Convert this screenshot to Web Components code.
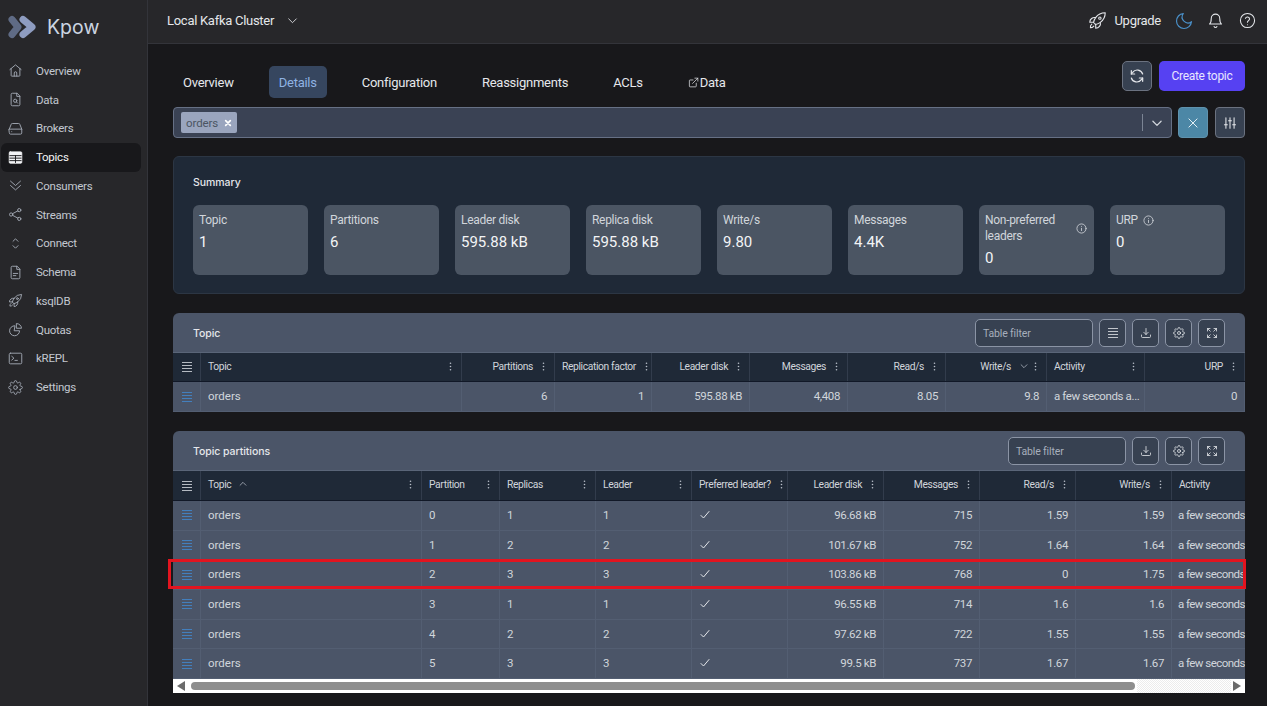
<!DOCTYPE html>
<html lang="en">
<head>
<meta charset="utf-8">
<title>Kpow</title>
<style>
  html, body { margin: 0; height: 100%; background: #18181b; overflow: hidden; }
  body { font-family: Roboto, "Liberation Sans", sans-serif; color: #e5e7eb; }
</style>
</head>
<body>
<kpow-app>
  <kpow-sidebar slot="sidebar">
    <kpow-nav-item icon="home">Overview</kpow-nav-item>
    <kpow-nav-item icon="file-search">Data</kpow-nav-item>
    <kpow-nav-item icon="drive">Brokers</kpow-nav-item>
    <kpow-nav-item icon="table" active>Topics</kpow-nav-item>
    <kpow-nav-item icon="chevrons">Consumers</kpow-nav-item>
    <kpow-nav-item icon="share">Streams</kpow-nav-item>
    <kpow-nav-item icon="selector">Connect</kpow-nav-item>
    <kpow-nav-item icon="file-text">Schema</kpow-nav-item>
    <kpow-nav-item icon="rocket">ksqlDB</kpow-nav-item>
    <kpow-nav-item icon="pie">Quotas</kpow-nav-item>
    <kpow-nav-item icon="terminal">kREPL</kpow-nav-item>
    <kpow-nav-item icon="gear">Settings</kpow-nav-item>
  </kpow-sidebar>
  <kpow-topbar slot="topbar" cluster="Local Kafka Cluster"></kpow-topbar>

  <kpow-tabs></kpow-tabs>
  <kpow-filter tag="orders"></kpow-filter>

  <kpow-summary>
    <kpow-stat label="Topic" value="1"></kpow-stat>
    <kpow-stat label="Partitions" value="6"></kpow-stat>
    <kpow-stat label="Leader disk" value="595.88 kB"></kpow-stat>
    <kpow-stat label="Replica disk" value="595.88 kB"></kpow-stat>
    <kpow-stat label="Write/s" value="9.80"></kpow-stat>
    <kpow-stat label="Messages" value="4.4K"></kpow-stat>
    <kpow-stat label="Non-preferred leaders" value="0" info="side"></kpow-stat>
    <kpow-stat label="URP" value="0" info="inline"></kpow-stat>
  </kpow-summary>

  <kpow-panel title="Topic" tools="bars,download,gear,expand">
    <kpow-table
      cols="261 93 97 98 98 98 101 98 100"
      align="l r r r r r r l r"
      head="Topic|Partitions|Replication factor|Leader disk|Messages|Read/s|Write/s:down|Activity|URP"
      rows="orders|6|1|595.88 kB|4,408|8.05|9.8|a few seconds a...|0"></kpow-table>
  </kpow-panel>

  <kpow-panel title="Topic partitions" tools="download,gear,expand" highlight="2">
    <kpow-table
      cols="221 78 96 96 96 96 96 96 96 110"
      align="l l l l l r r r r l"
      head="Topic:up|Partition|Replicas|Leader|Preferred leader?|Leader disk|Messages|Read/s|Write/s|Activity"
      rows="orders|0|1|1|check|96.68 kB|715|1.59|1.59|a few seconds;orders|1|2|2|check|101.67 kB|752|1.64|1.64|a few seconds;orders|2|3|3|check|103.86 kB|768|0|1.75|a few seconds;orders|3|1|1|check|96.55 kB|714|1.6|1.6|a few seconds;orders|4|2|2|check|97.62 kB|722|1.55|1.55|a few seconds;orders|5|3|3|check|99.5 kB|737|1.67|1.67|a few seconds"
      scrollbar></kpow-table>
  </kpow-panel>
</kpow-app>

<script>
const ICONS = {
  home: '<path d="M3 10.5 12 3l9 7.5"/><path d="M5 9v11a1 1 0 0 0 1 1h12a1 1 0 0 0 1-1V9"/><path d="M10 21v-5a2 2 0 0 1 4 0v5"/>',
  'file-search': '<path d="M14 2H7a2 2 0 0 0-2 2v16a2 2 0 0 0 2 2h10a2 2 0 0 0 2-2V7z"/><path d="M14 2v5h5"/><circle cx="11.5" cy="14" r="2.6"/><path d="m13.5 16 1.8 1.8"/>',
  drive: '<path d="M2 13h20v6a2 2 0 0 1-2 2H4a2 2 0 0 1-2-2z"/><path d="M2 13 5 5.5A2 2 0 0 1 7 4h10a2 2 0 0 1 2 1.5l3 7.5"/><path d="M6 17h.01"/>',
  table: '<rect x="2" y="3" width="20" height="18" rx="1.5" fill="currentColor"/><g stroke="#18181b" stroke-width="1.5"><path d="M3 9h18M3 13h18M3 17h18M12 9v11"/></g>',
  chevrons: '<path d="m4 5 8 7 8-7"/><path d="m4 12 8 7 8-7"/>',
  share: '<circle cx="18" cy="5" r="2.6"/><circle cx="5" cy="12" r="2.6"/><circle cx="18" cy="19" r="2.6"/><path d="m7.3 10.7 8.4-4.5M7.3 13.3l8.4 4.5"/>',
  selector: '<path d="m8 8.5 4-4 4 4"/><path d="m8 15.5 4 4 4-4"/>',
  'file-text': '<path d="M14 2H7a2 2 0 0 0-2 2v16a2 2 0 0 0 2 2h10a2 2 0 0 0 2-2V7z"/><path d="M14 2v5h5"/><path d="M8.500 13.500h7M8.500 17h4"/>',
  rocket: '<path d="M15.59 14.37a6 6 0 0 1-5.84 7.38v-4.8m5.84-2.58a14.98 14.98 0 0 0 6.16-12.12A14.98 14.98 0 0 0 9.631 8.41m5.96 5.96a14.926 14.926 0 0 1-5.841 2.58m-.119-8.54a6 6 0 0 0-7.381 5.84h4.8m2.581-5.84a14.927 14.927 0 0 0-2.58 5.84m2.699 2.7c-.103.021-.207.041-.311.06a15.09 15.09 0 0 1-2.448-2.448 14.9 14.9 0 0 1 .06-.312m-2.24 2.39a4.493 4.493 0 0 0-1.757 4.306 4.493 4.493 0 0 0 4.306-1.758M16.5 9a1.5 1.5 0 1 1-3 0 1.5 1.500 0 0 1 3 0z"/>',
  pie: '<path d="M10.500 6a8 8 0 1 0 8 8h-8z"/><path d="M14 2.500a7.500 7.500 0 0 1 7.500 7.500H14z"/>',
  terminal: '<rect x="2" y="3.500" width="20" height="17" rx="2"/><path d="m6 8.500 3.500 3L6 14.500M11 15h4"/>',
  gear: '<circle cx="12" cy="12" r="3"/><path d="M19.4 15a1.65 1.65 0 0 0 .33 1.82l.06.06a2 2 0 0 1 0 2.83 2 2 0 0 1-2.83 0l-.06-.06a1.65 1.65 0 0 0-1.82-.33 1.65 1.65 0 0 0-1 1.51V21a2 2 0 0 1-2 2 2 2 0 0 1-2-2v-.09A1.65 1.65 0 0 0 9 19.4a1.65 1.65 0 0 0-1.82.33l-.06.06a2 2 0 0 1-2.83 0 2 2 0 0 1 0-2.83l.06-.06a1.65 1.65 0 0 0 .33-1.82 1.65 1.65 0 0 0-1.51-1H3a2 2 0 0 1-2-2 2 2 0 0 1 2-2h.09A1.65 1.65 0 0 0 4.6 9a1.65 1.65 0 0 0-.33-1.82l-.06-.06a2 2 0 0 1 0-2.83 2 2 0 0 1 2.83 0l.06.06a1.65 1.65 0 0 0 1.82.33H9a1.65 1.65 0 0 0 1-1.51V3a2 2 0 0 1 2-2 2 2 0 0 1 2 2v.09a1.65 1.65 0 0 0 1 1.51 1.65 1.65 0 0 0 1.82-.33l.06-.06a2 2 0 0 1 2.83 0 2 2 0 0 1 0 2.83l-.06.06a1.65 1.65 0 0 0-.33 1.82V9a1.65 1.65 0 0 0 1.51 1H21a2 2 0 0 1 2 2 2 2 0 0 1-2 2h-.09a1.65 1.65 0 0 0-1.51 1z"/>',
  moon: '<path d="M21 12.790A9 9 0 1 1 11.210 3 7 7 0 0 0 21 12.790z"/>',
  bell: '<path d="M18 9a6 6 0 0 0-12 0c0 6-2.500 8-2.500 8h17S18 15 18 9z"/><path d="M10 20.500a2.200 2.200 0 0 0 4 0"/>',
  help: '<circle cx="12" cy="12" r="10"/><path d="M9.100 9a3 3 0 0 1 5.800 1c0 2-3 2.500-3 4.500"/><path d="M12 18h.01"/>',
  chevron: '<path d="m5 9 7 7 7-7"/>',
  down: '<path d="m5 9 7 7 7-7"/>',
  up: '<path d="m5 15 7-7 7 7"/>',
  refresh: '<path d="M20.500 9A8.500 8.500 0 0 0 5.500 6.500L3.500 9"/><path d="M3.500 4v5h5"/><path d="M3.500 15a8.500 8.500 0 0 0 15 2.500l2-2.500"/><path d="M20.500 20v-5h-5"/>',
  close: '<path d="M5 5l14 14M19 5 5 19"/>',
  sliders: '<path d="M5 3v18M12 3v18M19 3v18"/><path d="M2.500 15h5M9.500 8h5M16.500 15h5"/>',
  bars: '<path stroke-linecap="butt" d="M2 3h20M2 9h20M2 15h20M2 21h20"/>',
  download: '<path d="M12 3v12M7.500 10.500 12 15l4.500-4.500"/><path d="M3 16v3a2 2 0 0 0 2 2h14a2 2 0 0 0 2-2v-3"/>',
  expand: '<path d="M3 8V3h5M3 3l5.500 5.500M21 8V3h-5M21 3l-5.500 5.500M3 16v5h5M3 21l5.500-5.500M21 16v5h-5M21 21l-5.500-5.500"/>',
  info: '<circle cx="12" cy="12" r="10"/><path d="M12 11.500v5M12 7.500h.01"/>',
  check: '<path d="m4 13 5 5L20 5"/>',
  link: '<path d="M18 13.500V20a1.500 1.500 0 0 1-1.500 1.500h-12A1.500 1.500 0 0 1 3 20V8a1.500 1.500 0 0 1 1.500-1.500H11"/><path d="M15 2.500h6.500V9M21.500 2.500 10 14"/>'
};

class KpowIcon extends HTMLElement {
  connectedCallback() {
    const size = this.getAttribute('size') || 16;
    const stroke = this.getAttribute('stroke') || 1.6;
    this.attachShadow({ mode: 'open' });
    this.shadowRoot.innerHTML = `
      <style>
        :host { display: inline-flex; flex: none; width: ${size}px; height: ${size}px; }
        svg { width: 100%; height: 100%; display: block; }
      </style>
      <svg viewBox="0 0 24 24" fill="none" stroke="currentColor" stroke-width="${stroke}"
           stroke-linecap="round" stroke-linejoin="round">${ICONS[this.getAttribute('name')] || ''}</svg>`;
  }
}

class KpowApp extends HTMLElement {
  connectedCallback() {
    this.attachShadow({ mode: 'open' });
    this.shadowRoot.innerHTML = `
      <style>
        :host {
          display: grid;
          grid-template-columns: 148px 1fr;
          grid-template-rows: 44px 1fr;
          height: 706px;
          overflow: hidden;
        }
        ::slotted([slot="sidebar"]) { grid-row: 1 / 3; }
        main {
          display: flex;
          flex-direction: column;
          padding: 17px 22px 0 25px;
          min-width: 0;
        }
      </style>
      <slot name="sidebar"></slot>
      <slot name="topbar"></slot>
      <main><slot></slot></main>`;
  }
}

class KpowSidebar extends HTMLElement {
  connectedCallback() {
    this.attachShadow({ mode: 'open' });
    this.shadowRoot.innerHTML = `
      <style>
        :host {
          display: block;
          background: #27272a;
          border-right: 1px solid #33343a;
          box-sizing: border-box;
        }
        .logo {
          display: flex;
          align-items: center;
          gap: 10px;
          height: 56.6px;
          padding-left: 8px;
          box-sizing: border-box;
          font-family: Inter, sans-serif;
          font-size: 19.5px;
          color: #cbd5e1;
          padding-bottom: 2px;
        }
        svg { width: 29px; height: 24px; }
        nav { display: flex; flex-direction: column; padding: 0 6px 0 1px; }
      </style>
      <div class="logo">
        <svg viewBox="0 0 29 24" fill="none" stroke-width="7" stroke-linecap="round" stroke-linejoin="round">
          <path d="M4 4.500l6 7.500-6 7.500" stroke="#5f6b85"/>
          <path d="M15 4.500l9 7.500-9 7.500" stroke="#8e9cc0"/>
        </svg>
        <span>Kpow</span>
      </div>
      <nav><slot></slot></nav>`;
  }
}

class KpowNavItem extends HTMLElement {
  connectedCallback() {
    this.attachShadow({ mode: 'open' });
    this.shadowRoot.innerHTML = `
      <style>
        :host {
          display: flex;
          align-items: center;
          gap: 13px;
          height: 28.75px;
          padding-left: 7px;
          border-radius: 6px;
          font-size: 11.5px;
          letter-spacing: -.25px;
          color: #c3c8d0;
        }
        :host([active]) { background: #18181b; color: #f3f4f6; }
        kpow-icon { color: #a1a7b2; }
        :host([active]) kpow-icon { color: #f3f4f6; }
      </style>
      <kpow-icon name="${this.getAttribute('icon')}" size="15" stroke="1.5"></kpow-icon>
      <span><slot></slot></span>`;
  }
}

class KpowTopbar extends HTMLElement {
  connectedCallback() {
    this.attachShadow({ mode: 'open' });
    this.shadowRoot.innerHTML = `
      <style>
        :host {
          display: flex;
          align-items: center;
          background: #27272a;
          border-bottom: 1px solid #33343a;
          box-sizing: border-box;
          padding: 0 11px 2px 19px;
          font-size: 13px;
          letter-spacing: -.28px;
          color: #e5e7eb;
        }
        .cluster { margin-right: 12px; }
        .end { margin-left: auto; display: flex; align-items: center; }
        .upgrade { margin: 0 13px 0 7px; }
        .moon { color: #4a90c9; margin-right: 13px; }
        .bell { margin-right: 15px; }
      </style>
      <span class="cluster">${this.getAttribute('cluster')}</span>
      <kpow-icon name="chevron" size="13"></kpow-icon>
      <div class="end">
        <kpow-icon name="rocket" size="19" stroke="1.4"></kpow-icon>
        <span class="upgrade">Upgrade</span>
        <kpow-icon class="moon" name="moon" size="20" stroke="1.4"></kpow-icon>
        <kpow-icon class="bell" name="bell" size="17" stroke="1.5"></kpow-icon>
        <kpow-icon name="help" size="17" stroke="1.5"></kpow-icon>
      </div>`;
  }
}

class KpowTabs extends HTMLElement {
  connectedCallback() {
    this.attachShadow({ mode: 'open' });
    this.shadowRoot.innerHTML = `
      <style>
        :host { display: flex; align-items: flex-start; height: 37px; flex: none; }
        nav { display: flex; gap: 25px; margin-top: 5px; }
        a {
          display: flex;
          align-items: center;
          height: 32px;
          padding: 0 10px;
          border-radius: 5px;
          font-size: 13px;
          letter-spacing: -.25px;
          color: #e5e7eb;
        }
        a.active { background: #36465f; color: #8fb3e3; }
        a kpow-icon { margin-right: 1px; }
        .actions { margin-left: auto; display: flex; gap: 7px; }
        .square {
          width: 30px;
          height: 30px;
          box-sizing: border-box;
          display: flex;
          align-items: center;
          justify-content: center;
          background: #374151;
          border: 1px solid #6b7280;
          border-radius: 5px;
          color: #e5e7eb;
        }
        .create {
          width: 86px;
          height: 30px;
          display: flex;
          align-items: center;
          justify-content: center;
          background: #5641f2;
          border-radius: 5px;
          font-size: 12px;
          letter-spacing: -.3px;
          color: #e8e6ff;
        }
      </style>
      <nav>
        <a>Overview</a>
        <a class="active">Details</a>
        <a>Configuration</a>
        <a>Reassignments</a>
        <a>ACLs</a>
        <a><kpow-icon name="link" size="11"></kpow-icon>Data</a>
      </nav>
      <div class="actions">
        <div class="square"><kpow-icon name="refresh" size="16" stroke="1.8"></kpow-icon></div>
        <div class="create">Create topic</div>
      </div>`;
  }
}

class KpowFilter extends HTMLElement {
  connectedCallback() {
    this.attachShadow({ mode: 'open' });
    this.shadowRoot.innerHTML = `
      <style>
        :host { display: flex; gap: 6px; margin-top: 9px; flex: none; height: 31px; }
        .box {
          flex: 1;
          display: flex;
          align-items: center;
          padding: 0 7px;
          background: #3a4254;
          border: 1px solid #667085;
          border-radius: 4px;
          box-sizing: border-box;
        }
        .tag {
          display: flex;
          align-items: center;
          justify-content: space-between;
          width: 56px;
          height: 21px;
          padding: 0 5px;
          box-sizing: border-box;
          background: #9aa5be;
          border-radius: 2px;
          font-size: 11.5px;
          letter-spacing: -.1px;
          color: #4b5563;
        }
        .tag kpow-icon { color: #fff; }
        .sep { margin-left: auto; width: 1px; height: 17px; background: #7b8494; margin-right: 7px; }
        .caret { color: #d1d5db; }
        .btn {
          width: 30px;
          box-sizing: border-box;
          display: flex;
          align-items: center;
          justify-content: center;
          border-radius: 4px;
          border: 1px solid #6b7280;
          background: #374151;
          color: #e5e7eb;
        }
        .btn.clear { background: #4c87a6; border-color: #5f92ad; color: #f0f6fa; }
        .btn + .btn { margin-left: 1px; }
      </style>
      <div class="box">
        <div class="tag">${this.getAttribute('tag')}<kpow-icon name="close" size="8" stroke="5"></kpow-icon></div>
        <div class="sep"></div>
        <kpow-icon class="caret" name="chevron" size="14" stroke="2.2"></kpow-icon>
      </div>
      <div class="btn clear"><kpow-icon name="close" size="14"></kpow-icon></div>
      <div class="btn"><kpow-icon name="sliders" size="14" stroke="1.8"></kpow-icon></div>`;
  }
}

class KpowSummary extends HTMLElement {
  connectedCallback() {
    this.attachShadow({ mode: 'open' });
    this.shadowRoot.innerHTML = `
      <style>
        :host {
          display: block;
          margin-top: 18px;
          height: 138px;
          box-sizing: border-box;
          flex: none;
          padding: 20px 19px 0;
          background: #1f2937;
          border: 1px solid #2c3644;
          border-radius: 6px;
        }
        h2 {
          margin: 0 0 16px;
          font: 500 10.5px/12px Inter, sans-serif;
          letter-spacing: -.05px;
          color: #e5e7eb;
        }
        .cards { display: grid; grid-template-columns: repeat(8, 115px); gap: 16px; }
      </style>
      <h2>Summary</h2>
      <div class="cards"><slot></slot></div>`;
  }
}

class KpowStat extends HTMLElement {
  connectedCallback() {
    const info = this.getAttribute('info');
    this.attachShadow({ mode: 'open' });
    this.shadowRoot.innerHTML = `
      <style>
        :host {
          display: block;
          height: 70px;
          box-sizing: border-box;
          padding: 7px 6px 0;
          background: #4b5563;
          border-radius: 6px;
        }
        .label {
          display: flex;
          align-items: center;
          gap: 5px;
          font-size: 12px;
          letter-spacing: -.3px;
          line-height: 16px;
          color: #d1d5db;
        }
        .label.side { justify-content: space-between; padding-right: 1px; }
        .label span { display: block; }
        .label.side span { width: 84px; }
        .value { margin-top: 4px; font-size: 15px; line-height: 20px; color: #f3f4f6; }
      </style>
      <div class="label ${info || ''}">
        <span>${this.getAttribute('label')}</span>
        ${info ? '<kpow-icon name="info" size="11" stroke="1.8"></kpow-icon>' : ''}
      </div>
      <div class="value">${this.getAttribute('value')}</div>`;
  }
}

class KpowPanel extends HTMLElement {
  connectedCallback() {
    const tools = this.getAttribute('tools').split(',');
    const mark = this.getAttribute('highlight');
    this.attachShadow({ mode: 'open' });
    this.shadowRoot.innerHTML = `
      <style>
        :host {
          display: block;
          position: relative;
          margin-top: 19px;
          flex: none;
        }
        .frame { border-radius: 6px 6px 0 0; overflow: hidden; background: #4b5568; }
        header {
          display: flex;
          align-items: center;
          height: 40px;
          box-sizing: border-box;
          padding: 0 20px 0 20px;
          gap: 6px;
          border-bottom: 1px solid #5a6578;
        }
        h2 {
          margin: 2px auto 0 0;
          font: 500 10.5px/12px Inter, sans-serif;
          letter-spacing: -.05px;
          color: #e5e7eb;
        }
        .search {
          width: 118px;
          height: 28px;
          box-sizing: border-box;
          display: flex;
          align-items: center;
          padding: 1px 0 0 7px;
          background: #374151;
          border: 1px solid #8b94a5;
          border-radius: 5px;
          font-size: 10.5px;
          letter-spacing: -.15px;
          color: #a7afbc;
        }
        .tool {
          width: 27px;
          height: 28px;
          box-sizing: border-box;
          display: flex;
          align-items: center;
          justify-content: center;
          background: #374151;
          border: 1px solid #8b94a5;
          border-radius: 5px;
          color: #e5e7eb;
        }
        .highlight {
          position: absolute;
          left: -5px;
          right: -1px;
          top: 128px;
          height: 30px;
          box-sizing: border-box;
          border: 3px solid #e2141f;
          pointer-events: none;
        }
      </style>
      <div class="frame">
        <header>
          <h2>${this.getAttribute('title')}</h2>
          <div class="search">Table filter</div>
          ${tools.map(t => `<div class="tool"><kpow-icon name="${t}" size="12"></kpow-icon></div>`).join('')}
        </header>
        <slot></slot>
      </div>
      ${mark === null ? '' : '<div class="highlight"></div>'}`;
  }
}

class KpowTable extends HTMLElement {
  connectedCallback() {
    const cols = this.getAttribute('cols').split(' ');
    const align = this.getAttribute('align').split(' ');
    const head = this.getAttribute('head').split('|');
    const rows = this.getAttribute('rows').split(';').map(r => r.split('|'));
    const template = `28px ${cols.map(c => c + 'px').join(' ')}`;

    const headCells = head.map((h, i) => {
      const [label, sort] = h.split(':');
      const right = align[i] === 'r';
      return `<div class="th ${right ? 'r' : ''}">
        <span>${label}</span>
        ${sort ? `<kpow-icon class="sort" name="${sort}" size="10" stroke="1.8"></kpow-icon>` : ''}
        <i></i>
        <svg class="kebab" viewBox="0 0 3 11" fill="currentColor"><circle cx="1.500" cy="1.500" r="1"/><circle cx="1.500" cy="5.500" r="1"/><circle cx="1.500" cy="9.500" r="1"/></svg>
      </div>`;
    }).join('');

    const bodyRows = rows.map(r => `
      <div class="row" style="grid-template-columns:${template}">
        <div class="td handle"><kpow-icon name="bars" size="12" stroke="1.7"></kpow-icon></div>
        ${r.map((v, i) => `<div class="td ${align[i] === 'r' ? 'r' : ''} ${i ? 'tight' : ''}">${v === 'check'
          ? '<kpow-icon class="check" name="check" size="12" stroke="2"></kpow-icon>' : v}</div>`).join('')}
      </div>`).join('');

    const scrollbar = this.hasAttribute('scrollbar') ? `
      <div class="scrollbar">
        <b class="left"></b>
        <div class="thumb"></div>
        <div class="rest"></div>
        <b class="right"></b>
      </div>` : '';

    const many = rows.length > 1;
    this.attachShadow({ mode: 'open' });
    this.shadowRoot.innerHTML = `
      <style>
        :host { display: block; font-size: 11px; color: #d1d5db; }
        .rows { overflow: hidden; }
        .row { display: grid; width: max-content; }
        .head {
          height: ${many ? 30 : 29}px;
          background: #1f2937;
          color: #d1d5db;
          font-size: 10.3px;
          letter-spacing: -.38px;
          border-bottom: 1px solid #111827;
          box-sizing: border-box;
        }
        .th, .td {
          display: flex;
          align-items: center;
          padding: 0 7px;
          box-sizing: border-box;
          white-space: nowrap;
          overflow: hidden;
          border-right: 1px solid #3a4558;
          min-width: 0;
        }
        .th { padding: 0 9px ${many ? 3 : 2}px 7px; border-right-color: #323c4c; }
        .th i { flex: 1; }
        .th.r i { order: -1; }
        .th .kebab { width: 3px; height: 9px; flex: none; margin-left: 9px; color: #b8bec9; }
        .th .sort { margin-left: 7px; color: #b8bec9; }
        .th.r .sort { margin-left: 8px; margin-right: -4px; }
        .body .row { height: 29.67px; border-bottom: 1px solid #535e72; box-sizing: border-box; }
        .single .row { height: 30px; }
        .single .td { padding-bottom: 1px; }
        .td { border-right-color: #535e72; font-size: 11.5px; padding-bottom: .6px; }
        .td.tight { letter-spacing: -.37px; }
        .body:not(.single) .td:last-child { letter-spacing: -.55px; padding-left: 6px; }
        .td.r { justify-content: flex-end; }
        .td .check { color: #e5e7eb; }
        .th.handle, .td.handle { padding: 0; justify-content: center; }
        .td.handle { color: #4286cc; }
        .scrollbar {
          display: flex;
          align-items: center;
          height: 14px;
          background: #fff;
          padding: 0 4px;
          box-sizing: border-box;
        }
        .left, .right { width: 0; height: 0; border-top: 5px solid transparent; border-bottom: 5px solid transparent; }
        .left { border-right: 8px solid #6b6b6b; }
        .right { border-left: 8px solid #6b6b6b; }
        .thumb { width: 944px; height: 8px; margin-left: 6px; background: #8e8e8e; border-radius: 4px; }
        .rest {
          flex: 1;
          align-self: stretch;
          margin: 0 2px;
          background: repeating-conic-gradient(#fff 0 25%, #ececec 0 50%) 0 0 / 2px 2px;
        }
      </style>
      <div class="rows">
        <div class="row head" style="grid-template-columns:${template}">
          <div class="th handle"><kpow-icon name="bars" size="12" stroke="1.7"></kpow-icon></div>
          ${headCells}
        </div>
      </div>
      <div class="rows body ${many ? '' : 'single'}">${bodyRows}</div>
      ${scrollbar}`;
  }
}

customElements.define('kpow-icon', KpowIcon);
customElements.define('kpow-app', KpowApp);
customElements.define('kpow-sidebar', KpowSidebar);
customElements.define('kpow-nav-item', KpowNavItem);
customElements.define('kpow-topbar', KpowTopbar);
customElements.define('kpow-tabs', KpowTabs);
customElements.define('kpow-filter', KpowFilter);
customElements.define('kpow-summary', KpowSummary);
customElements.define('kpow-stat', KpowStat);
customElements.define('kpow-panel', KpowPanel);
customElements.define('kpow-table', KpowTable);
</script>
</body>
</html>
